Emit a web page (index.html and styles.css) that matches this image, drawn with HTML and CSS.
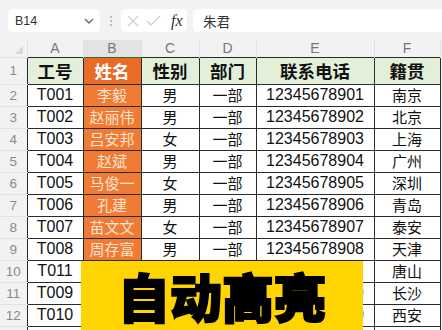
FILE: index.html
```html
<!DOCTYPE html>
<html lang="zh-CN">
<head>
<meta charset="utf-8">
<title>自动高亮</title>
<link rel="stylesheet" href="styles.css">
</head>
<body>
<div class="toolbar">
  <div class="namebox">
    <span>B14</span>
    <svg class="chev" width="10" height="6" viewBox="0 0 10 6"><polyline points="1,1 5,5 9,1" fill="none" stroke="#666" stroke-width="1.4"/></svg>
  </div>
  <div class="dots">
    <svg width="4" height="12" viewBox="0 0 4 12"><circle cx="2" cy="2" r="1" fill="#aaa"/><circle cx="2" cy="6" r="1" fill="#aaa"/><circle cx="2" cy="10" r="1" fill="#aaa"/></svg>
  </div>
  <div class="fxbox">
    <svg width="12" height="12" viewBox="0 0 12 12"><path d="M1 1 L11 11 M11 1 L1 11" stroke="#cfcfcf" stroke-width="1.3" fill="none"/></svg>
    <svg width="15" height="12" viewBox="0 0 15 12"><polyline points="1,6 5,10 14,1" stroke="#cfcfcf" stroke-width="1.3" fill="none"/></svg>
    <span class="fx">fx</span>
  </div>
  <div class="formula">朱君</div>
</div>
<div class="sheet">
  <table class="grid">
    <colgroup>
      <col class="c-rh"><col class="c-a"><col class="c-b"><col class="c-c"><col class="c-d"><col class="c-e"><col class="c-f">
    </colgroup>
    <thead>
      <tr class="letters">
        <th class="corner"><span class="tri"></span></th>
        <th>A</th><th class="sel">B</th><th>C</th><th>D</th><th>E</th><th>F</th>
      </tr>
    </thead>
    <tbody>
      <tr class="head">
        <th class="rn">1</th>
        <td>工号</td><td class="hl">姓名</td><td>性别</td><td>部门</td><td>联系电话</td><td>籍贯</td>
      </tr>
      <tr><th class="rn">2</th><td class="num">T001</td><td class="nm">李毅</td><td>男</td><td>一部</td><td class="num">12345678901</td><td>南京</td></tr>
      <tr><th class="rn">3</th><td class="num">T002</td><td class="nm">赵丽伟</td><td>男</td><td>一部</td><td class="num">12345678902</td><td>北京</td></tr>
      <tr><th class="rn">4</th><td class="num">T003</td><td class="nm">吕安邦</td><td>女</td><td>一部</td><td class="num">12345678903</td><td>上海</td></tr>
      <tr><th class="rn">5</th><td class="num">T004</td><td class="nm">赵斌</td><td>男</td><td>一部</td><td class="num">12345678904</td><td>广州</td></tr>
      <tr><th class="rn">6</th><td class="num">T005</td><td class="nm">马俊一</td><td>女</td><td>一部</td><td class="num">12345678905</td><td>深圳</td></tr>
      <tr><th class="rn">7</th><td class="num">T006</td><td class="nm">孔建</td><td>男</td><td>一部</td><td class="num">12345678906</td><td>青岛</td></tr>
      <tr><th class="rn">8</th><td class="num">T007</td><td class="nm">苗文文</td><td>女</td><td>一部</td><td class="num">12345678907</td><td>泰安</td></tr>
      <tr><th class="rn">9</th><td class="num">T008</td><td class="nm">周存富</td><td>男</td><td>一部</td><td class="num">12345678908</td><td>天津</td></tr>
      <tr><th class="rn">10</th><td class="num">T011</td><td></td><td></td><td></td><td class="num">12345678911</td><td>唐山</td></tr>
      <tr><th class="rn">11</th><td class="num">T009</td><td></td><td></td><td></td><td class="num">12345678909</td><td>长沙</td></tr>
      <tr><th class="rn">12</th><td class="num">T010</td><td></td><td></td><td></td><td class="num">12345678910</td><td>西安</td></tr>
      <tr class="last"><th class="rn">13</th><td class="num">T012</td><td></td><td></td><td></td><td class="num">12345678912</td><td>成都</td></tr>
    </tbody>
  </table>
  <div class="banner">自动高亮</div>
</div>
</body>
</html>
```
FILE: styles.css
```css
* { box-sizing: border-box; }
html, body {
  margin: 0;
  padding: 0;
  width: 442px;
  height: 330px;
  overflow: hidden;
  background: #f2f2f2;
  font-family: "Liberation Sans", "Noto Sans CJK SC", sans-serif;
  color: #111;
}

.toolbar {
  height: 40px;
  display: flex;
  align-items: flex-start;
  padding: 9px 0 0 8px;
}
.namebox {
  width: 92px;
  height: 23px;
  background: #fff;
  border-radius: 5px;
  display: flex;
  align-items: center;
  justify-content: space-between;
  padding: 0 6px 0 7px;
  font-size: 12.5px;
  color: #333;
}
.dots {
  width: 21px;
  height: 23px;
  display: flex;
  align-items: center;
  justify-content: center;
}
.fxbox {
  width: 66px;
  height: 23px;
  background: #fff;
  border-radius: 5px;
  display: flex;
  align-items: center;
  padding: 0 4px 0 6px;
  gap: 7px;
}
.fx {
  font-family: "Liberation Serif", "DejaVu Serif", serif;
  font-style: italic;
  font-size: 16px;
  color: #333;
  margin-left: 3px;
}
.formula {
  flex: 1;
  height: 23px;
  margin-left: 6px;
  background: #fff;
  border-radius: 5px 0 0 5px;
  display: flex;
  align-items: center;
  padding-left: 10px;
  font-family: "Noto Sans CJK SC", sans-serif;
  font-size: 13.5px;
  color: #333;
}

.sheet { position: relative; }

.grid {
  border-collapse: collapse;
  table-layout: fixed;
  width: 440px;
}
.c-rh { width: 27px; }
.c-a { width: 56px; }
.c-b { width: 58px; }
.c-c { width: 58px; }
.c-d { width: 57px; }
.c-e { width: 118px; }
.c-f { width: 66px; }

.grid th, .grid td {
  padding: 0;
  text-align: center;
  vertical-align: middle;
  white-space: nowrap;
  overflow: hidden;
}

.letters th {
  height: 17px;
  font-weight: 300;
  font-size: 14px;
  color: #777;
  background: #f2f2f2;
  border-left: 1px solid #e0e0e0;
  border-right: 1px solid #e0e0e0;
  border-bottom: none;
  line-height: 16px;
}
.letters th.sel {
  background: #e3e3e3;
  border-bottom: 1px solid #2e6b3a;
}
.letters .corner {
  position: relative;
  border-left: none;
}
.tri {
  position: absolute;
  right: 4px;
  bottom: 3px;
  width: 0;
  height: 0;
  border-left: 8px solid transparent;
  border-bottom: 8px solid #d6d6d6;
}

.rn {
  font-weight: 400;
  font-size: 13.5px;
  color: #8a8a8a;
  background: #f2f2f2;
  border-top: 1px solid #e2e2e2;
  border-bottom: 1px solid #e2e2e2;
  border-right: none;
}

.grid td {
  height: 22px;
  border: 1px solid #2a2a2a;
  background: #fff;
  font-family: "Noto Sans CJK SC", sans-serif;
  font-size: 15px;
  line-height: 20px;
}
.grid td.num {
  font-family: "Liberation Sans", "Noto Sans CJK SC", sans-serif;
  font-size: 16px;
}
.grid td.nm {
  background: #ef7b34;
  color: #fde4d2;
}
.last td, .last th {
  vertical-align: top;
  line-height: 18px;
  padding-top: 2px;
}

.head td {
  height: 27px;
  background: #e2efd9;
  font-weight: 700;
  font-size: 17.5px;
}
.head td.hl {
  background: #e86c26;
  color: #fff;
}

.banner {
  position: absolute;
  left: 81px;
  top: 221px;
  width: 282px;
  height: 80px;
  background: #ffd400;
  color: #000;
  text-align: center;
  font-family: "Noto Sans CJK SC", sans-serif;
  font-weight: 900;
  font-size: 52px;
  line-height: 52px;
  padding-top: 9px;
  -webkit-text-stroke: 2px #000;
}
```
